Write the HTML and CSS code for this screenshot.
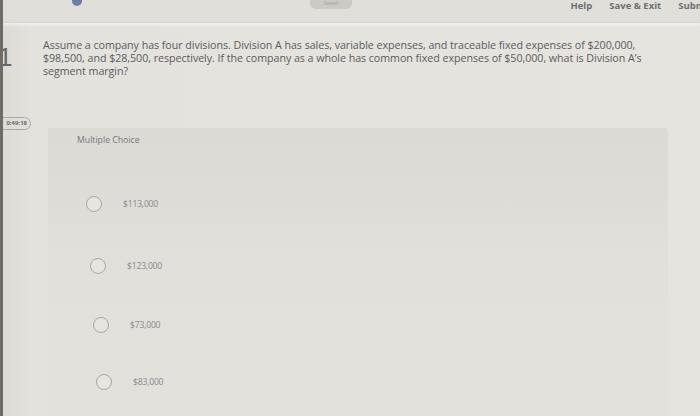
FILE: index.html
```html
<!DOCTYPE html>
<html>
<head>
<meta charset="utf-8">
<link rel="stylesheet" href="styles.css">
</head>
<body>
<div class="page">
  <header class="topbar">
    <div class="left-tools"><span class="tool-dot"></span></div>
    <div class="saved">Saved</div>
    <div class="spacer"></div>
    <nav class="nav">
      <span class="nav-link">Help</span>
      <span class="nav-link">Save &amp; Exit</span>
      <span class="nav-link submit">Submit</span>
    </nav>
  </header>
  <section class="question">
    <div class="qnum">1</div>
    <p class="qtext">Assume a company has four divisions. Division A has sales, variable expenses, and traceable fixed expenses of $200,000, $98,500, and $28,500, respectively. If the company as a whole has common fixed expenses of $50,000, what is Division A’s segment margin?</p>
  </section>
  <section class="answer">
    <div class="side">
      <div class="timer">0:49:18</div>
    </div>
    <div class="panel">
      <div class="mc-label">Multiple Choice</div>
      <ul class="options">
        <li class="option"><span class="radio"></span><span class="opt-text">$113,000</span></li>
        <li class="option"><span class="radio"></span><span class="opt-text">$123,000</span></li>
        <li class="option"><span class="radio"></span><span class="opt-text">$73,000</span></li>
        <li class="option"><span class="radio"></span><span class="opt-text">$83,000</span></li>
      </ul>
    </div>
  </section>
</div>
</body>
</html>
```
FILE: styles.css
```css
html, body {
  margin: 0;
  padding: 0;
}
body {
  width: 700px;
  height: 416px;
  overflow: hidden;
  background: #e4e3de;
  font-family: "Open Sans", "Liberation Sans", sans-serif;
}
.page {
  height: 416px;
  border-left: 3px solid #6e6c67;
  box-sizing: border-box;
  background: linear-gradient(90deg, #dcdbd5 0, #e3e2dd 30px, #e5e4df 100%);
  overflow: hidden;
}
.topbar {
  height: 22px;
  display: flex;
  align-items: flex-start;
  background: #e0dfda;
  border-bottom: 1px solid #d6d5cf;
  box-shadow: 0 2px 3px rgba(255,255,255,0.6);
}
.left-tools {
  width: 300px;
  display: flex;
}
.tool-dot {
  width: 10px;
  height: 6px;
  margin-left: 69px;
  border-radius: 0 0 5px 5px;
  background: #6d7ea6;
}
.saved {
  width: 42px;
  height: 9px;
  margin-left: 7px;
  border-radius: 0 0 6px 6px;
  background: #cbcac5;
  color: #a3a29d;
  font-size: 5px;
  line-height: 7px;
  text-align: center;
  overflow: hidden;
}
.spacer {
  flex: 1;
}
.nav {
  display: flex;
  gap: 17px;
  margin-right: -12px;
}
.nav-link {
  font-family: "Open Sans", "Liberation Sans", sans-serif;
  font-weight: 700;
  font-size: 9.5px;
  line-height: 11px;
  color: #6f6f70;
  margin-top: 0;
}
.question {
  display: flex;
  padding-top: 16px;
  height: 88px;
  box-sizing: border-box;
}
.qnum {
  width: 40px;
  flex: none;
  margin-left: -5px;
  font-family: "Liberation Sans", sans-serif;
  font-size: 26px;
  line-height: 30px;
  color: #68676a;
  padding-top: 3px;
}
.qtext {
  margin: 0;
  width: 605px;
  margin-left: 5px;
  font-size: 10.7px;
  line-height: 13px;
  color: #5c5b5e;
  letter-spacing: -0.05px;
}
.answer {
  display: flex;
  align-items: flex-start;
}
.side {
  width: 45px;
  flex: none;
  padding-top: 6px;
}
.timer {
  width: 34px;
  height: 11px;
  margin-left: -11px;
  border: 1.5px solid #a9a8a4;
  border-radius: 7px;
  font-size: 6px;
  line-height: 11px;
  font-weight: 700;
  color: #6f6e6b;
  text-align: right;
  padding-right: 3px;
  box-sizing: content-box;
}
.panel {
  margin-top: 17px;
  width: 620px;
  height: 300px;
  background: linear-gradient(180deg, #dbdad4 0, #dddcd6 60px, #e1e0db 140px, #e2e1dc 100%);
  border-radius: 2px 4px 0 0;
  padding: 6px 0 0 29px;
  box-sizing: border-box;
}
.mc-label {
  font-size: 8.7px;
  line-height: 12px;
  color: #77767a;
}
.options {
  list-style: none;
  margin: 0;
  padding: 48px 0 0 0;
  display: flex;
  flex-direction: column;
  gap: 40px;
}
.option {
  display: flex;
  align-items: center;
  gap: 21px;
  height: 20px;
}
.option:nth-child(2) { margin-left: 4px; margin-top: 2px; }
.option:nth-child(3) { margin-left: 7px; margin-top: -1px; }
.option:nth-child(4) { margin-left: 10px; margin-top: -3px; }
.radio {
  width: 16px;
  height: 16px;
  border: 1.5px solid #a8a7a3;
  border-radius: 50%;
  box-sizing: border-box;
  background: #e6e5e0;
  margin-left: 9px;
}
.opt-text {
  font-size: 8.6px;
  color: #8a898c;
  letter-spacing: -0.2px;
}
```
